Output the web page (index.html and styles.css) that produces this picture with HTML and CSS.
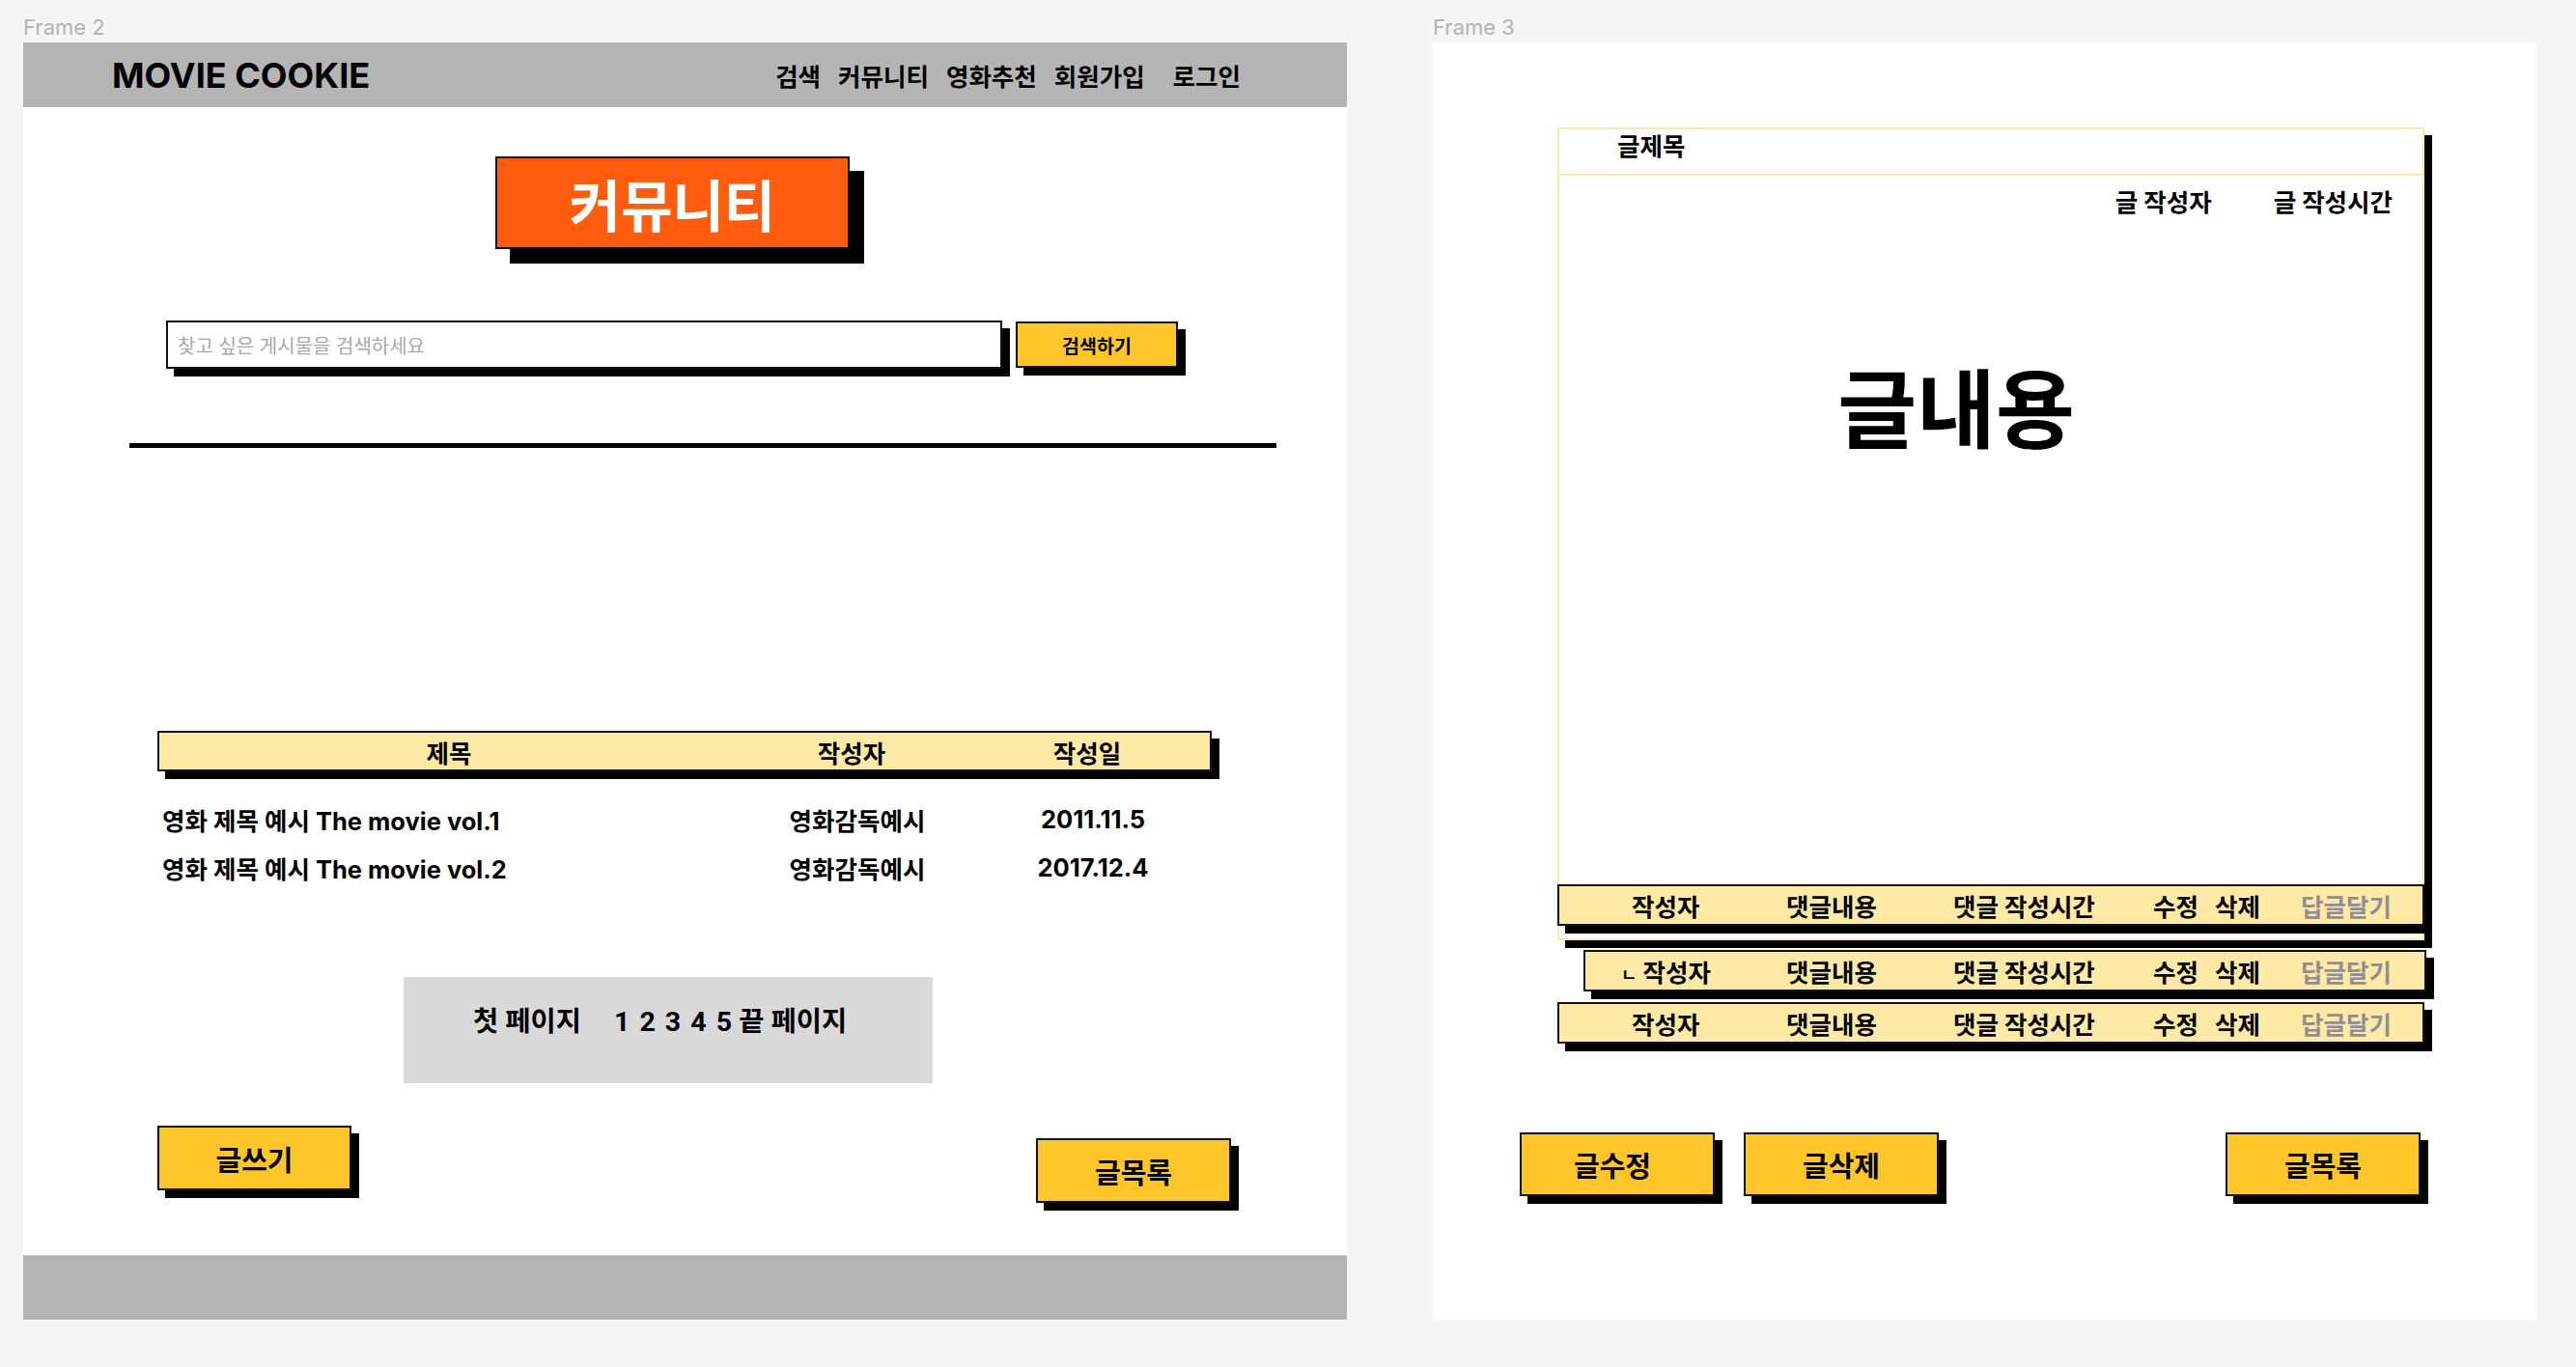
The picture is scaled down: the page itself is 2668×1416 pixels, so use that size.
FILE: index.html
```html
<!DOCTYPE html>
<html lang="ko">
    <head>
        <meta charset="UTF-8" />
        <meta name="viewport" content="width=device-width" />
        <title>MOVIE COOKIE - 커뮤니티</title>
        <link rel="stylesheet" href="styles.css">
    </head>
    <body>
        <div class="canvas">
            <!-- Frame 2: community list -->
            <section class="frame-wrap frame-wrap-list">
                <div class="frame-label">Frame 2</div>
                <div class="frame frame-list">
                    <header class="topbar">
                        <span class="logo">MOVIE COOKIE</span>
                        <nav class="menu">
                            <a>검색</a>
                            <a>커뮤니티</a>
                            <a>영화추천</a>
                            <a>회원가입</a>
                            <a class="login">로그인</a>
                        </nav>
                    </header>

                    <main class="board">
                        <h1 class="page-title">커뮤니티</h1>

                        <form class="search">
                            <input class="search-input" type="text" placeholder="찾고 싶은 게시물을 검색하세요" />
                            <button class="search-btn" type="button">검색하기</button>
                        </form>

                        <hr class="divider" />

                        <div class="list-head">
                            <span>제목</span>
                            <span>작성자</span>
                            <span>작성일</span>
                        </div>
                        <ul class="list">
                            <li class="list-row">
                                <span class="col-title">영화 제목 예시 The movie vol.1</span>
                                <span>영화감독예시</span>
                                <span>2011.11.5</span>
                            </li>
                            <li class="list-row">
                                <span class="col-title">영화 제목 예시 The movie vol.2</span>
                                <span>영화감독예시</span>
                                <span>2017.12.4</span>
                            </li>
                        </ul>

                        <p class="pager">첫 페이지<span class="pages">1 2 3 4 5</span> 끝 페이지</p>

                        <div class="actions">
                            <button class="btn" type="button">글쓰기</button>
                            <button class="btn btn-low" type="button">글목록</button>
                        </div>
                    </main>

                    <footer class="bottombar"></footer>
                </div>
            </section>

            <!-- Frame 3: post detail -->
            <section class="frame-wrap frame-wrap-post">
                <div class="frame-label">Frame 3</div>
                <div class="frame frame-post">
                    <article class="post">
                        <div class="post-title">글제목</div>
                        <div class="post-meta">
                            <span>글 작성자</span>
                            <span>글 작성시간</span>
                        </div>
                        <div class="post-content">글내용</div>

                        <div class="comment comment-first">
                            <span class="c-writer">작성자</span>
                            <span class="c-text">댓글내용</span>
                            <span class="c-time">댓글 작성시간</span>
                            <span class="c-edit">수정</span>
                            <span class="c-del">삭제</span>
                            <span class="c-reply">답글달기</span>
                        </div>
                    </article>

                    <div class="comment comment-reply">
                        <span class="c-writer"><small>ㄴ</small> 작성자</span>
                        <span class="c-text">댓글내용</span>
                        <span class="c-time">댓글 작성시간</span>
                        <span class="c-edit">수정</span>
                        <span class="c-del">삭제</span>
                        <span class="c-reply">답글달기</span>
                    </div>

                    <div class="comment comment-next">
                        <span class="c-writer">작성자</span>
                        <span class="c-text">댓글내용</span>
                        <span class="c-time">댓글 작성시간</span>
                        <span class="c-edit">수정</span>
                        <span class="c-del">삭제</span>
                        <span class="c-reply">답글달기</span>
                    </div>

                    <div class="post-actions">
                        <button class="btn btn-wide btn-edit" type="button">글수정</button>
                        <button class="btn btn-wide btn-gap" type="button">글삭제</button>
                        <button class="btn btn-wide btn-right" type="button">글목록</button>
                    </div>
                </div>
            </section>
        </div>
    </body>
</html>
```

FILE: styles.css
```css
body {
    margin: 0;
    background-color: #f5f5f5;
    font-family: Inter, "Noto Sans CJK KR", sans-serif;
    color: #000000;
}

.canvas {
    display: flex;
    width: 2668px;
    height: 1416px;
    padding-left: 24px;
    box-sizing: border-box;
}

.frame-wrap-list {
    width: 1371px;
}

.frame-wrap-post {
    width: 1143px;
    margin-left: 89px;
}

.frame-label {
    height: 44px;
    box-sizing: border-box;
    padding-top: 16px;
    font-size: 22px;
    line-height: 25px;
    color: #b3b3b3;
}

.frame {
    height: 1323px;
    background-color: #ffffff;
}

/* ---------- Frame 2 ---------- */

.frame-list {
    display: flex;
    flex-direction: column;
}

.topbar {
    height: 67px;
    flex: none;
    display: flex;
    align-items: center;
    justify-content: space-between;
    padding: 0 110px 0 92px;
    background-color: #b5b5b5;
}

.logo {
    font-size: 36px;
    font-weight: 700;
}

.menu {
    display: flex;
    gap: 18px;
    font-size: 25.5px;
    font-weight: 700;
}

.menu .login {
    margin-left: 11px;
}

.board {
    flex: 1;
    display: flex;
    flex-direction: column;
    align-items: flex-start;
}

.page-title {
    margin: 51px 0 0 489px;
    width: 367px;
    height: 96px;
    box-sizing: border-box;
    display: flex;
    align-items: center;
    justify-content: center;
    border: 2px solid #111111;
    background-color: #ff5c10;
    color: #ffffff;
    font-family: "Noto Sans CJK KR", sans-serif;
    font-size: 58px;
    font-weight: 700;
    box-shadow: 15px 15px 0 #000000;
}

.search {
    display: flex;
    align-items: flex-start;
    margin: 74px 0 0 148px;
}

.search-input {
    width: 866px;
    height: 50px;
    box-sizing: border-box;
    padding: 0 10px;
    border: 2px solid #111111;
    outline: none;
    font-family: "Noto Sans CJK KR", sans-serif;
    font-size: 20px;
    box-shadow: 8px 8px 0 #000000;
}

.search-input::placeholder {
    color: #a8a8a8;
}

.search-btn {
    margin: 1px 0 0 14px;
    width: 168px;
    height: 48px;
    border: 2px solid #111111;
    background-color: #ffc62b;
    font-family: "Noto Sans CJK KR", sans-serif;
    font-size: 19.5px;
    font-weight: 700;
    box-shadow: 8px 8px 0 #000000;
}

.divider {
    margin: 77px 0 0 110px;
    width: 1188px;
    height: 5px;
    border: 0;
    background-color: #000000;
}

.list-head {
    margin: 293px 0 0 139px;
    width: 1092px;
    height: 42px;
    box-sizing: border-box;
    display: grid;
    grid-template-columns: 600px 234px 254px;
    align-items: center;
    text-align: center;
    border: 2px solid #111111;
    background-color: #ffe9a6;
    font-size: 25.5px;
    font-weight: 700;
    box-shadow: 8px 8px 0 #000000;
}

.list {
    list-style: none;
    margin: 24px 0 0 139px;
    padding: 0;
    width: 1092px;
}

.list-row {
    height: 50px;
    display: grid;
    grid-template-columns: 608px 234px 254px;
    align-items: center;
    text-align: center;
    font-size: 25.5px;
    font-weight: 700;
}

.list-row .col-title {
    padding-left: 5px;
    text-align: left;
}

.pager {
    margin: 89px 0 0 394px;
    width: 548px;
    height: 110px;
    box-sizing: border-box;
    padding: 30px 0 0 72px;
    background-color: #d9d9d9;
    font-family: Roboto, "Noto Sans CJK KR", sans-serif;
    font-size: 28.5px;
    font-weight: 700;
    line-height: 34px;
}

.pager .pages {
    margin-left: 34px;
    word-spacing: 3px;
}

.actions {
    margin: 44px 0 0 139px;
    width: 1112px;
    display: flex;
    align-items: flex-start;
    justify-content: space-between;
}

.btn {
    width: 201px;
    height: 67px;
    box-sizing: border-box;
    padding: 0;
    border: 2px solid #111111;
    background-color: #ffc62b;
    color: #000000;
    font-family: "Noto Sans CJK KR", sans-serif;
    font-size: 29px;
    font-weight: 700;
    box-shadow: 8px 8px 0 #000000;
}

.btn-low {
    margin-top: 13px;
    width: 202px;
}

.bottombar {
    height: 67px;
    flex: none;
    box-sizing: border-box;
    border-top: 1px solid #c9c9c9;
    background-color: #b5b5b5;
}

/* ---------- Frame 3 ---------- */

.frame-post {
    padding: 88px 0 0 90px;
    box-sizing: border-box;
}

.post {
    margin-left: 39px;
    width: 898px;
    height: 842px;
    box-sizing: border-box;
    display: flex;
    flex-direction: column;
    border: 2px solid #ffe9a6;
    box-shadow: 8px 8px 0 #000000;
}

.post-title {
    height: 48px;
    box-sizing: border-box;
    padding: 3px 0 0 60px;
    border-bottom: 2px solid #ffe9a6;
    font-size: 25.5px;
    font-weight: 700;
    line-height: 30px;
}

.post-meta {
    display: flex;
    justify-content: flex-end;
    gap: 64px;
    padding: 13px 31px 0 0;
    font-size: 25.5px;
    font-weight: 700;
    line-height: 30px;
}

.post-content {
    margin-top: 149px;
    padding-right: 72px;
    text-align: center;
    font-family: "Noto Sans CJK KR", sans-serif;
    font-size: 89px;
    font-weight: 700;
    line-height: 89px;
}

.comment {
    height: 43px;
    box-sizing: border-box;
    display: flex;
    align-items: center;
    padding-left: 75px;
    border: 2px solid #111111;
    background-color: #ffe9a6;
    font-size: 25.5px;
    font-weight: 700;
    box-shadow: 8px 8px 0 #000000;
    white-space: nowrap;
}

.comment-first {
    margin: auto -2px 13px -2px;
}

.comment-reply {
    margin: 10px 0 0 66px;
    width: 873px;
    padding-left: 37px;
}

.comment-next {
    margin: 11px 0 0 39px;
    width: 898px;
}

.c-writer {
    width: 160px;
}

.comment-reply .c-writer {
    width: 171px;
}

.c-writer small {
    font-size: 18px;
}

.c-text {
    width: 173px;
}

.c-time {
    width: 207px;
}

.c-edit {
    width: 64px;
}

.c-del {
    width: 89px;
}

.c-reply {
    color: #8f8f8f;
}

.post-actions {
    margin-top: 92px;
    width: 933px;
    display: flex;
    align-items: flex-start;
}

.btn-wide {
    width: 202px;
    height: 66px;
}

.btn-edit {
    padding-right: 10px;
}

.btn-gap {
    margin-left: 30px;
}

.btn-right {
    margin-left: auto;
}
```
